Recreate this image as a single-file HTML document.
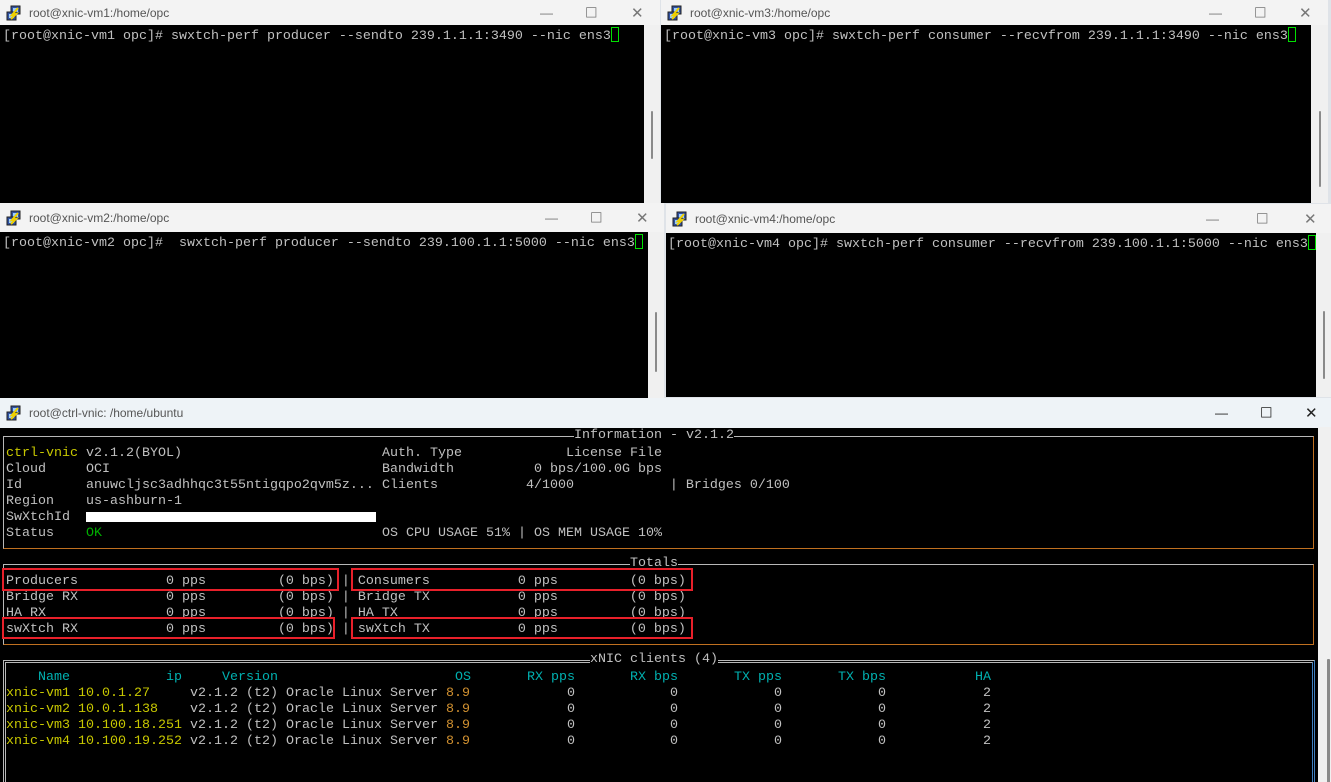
<!DOCTYPE html>
<html style="overflow:hidden"><head><meta charset="utf-8"><style>
*{margin:0;padding:0;box-sizing:border-box}
html,body{width:1331px;height:782px;overflow:hidden}
body{background:#dfe3e8;position:relative;font-family:"Liberation Mono",monospace}
.win{position:absolute;background:#f3f3f3;overflow:hidden}
.tb{position:absolute;left:0;right:0;top:0;font:12px "Liberation Sans",sans-serif;color:#555}
.tb .t{position:absolute;left:29px;top:50%;transform:translateY(-50%)}
.ico{position:absolute;left:6px;top:50%;margin-top:-8px;width:16px;height:16px}
.ctl{position:absolute;top:50%;transform:translateY(-50%);color:#777;font-size:13px}
.term{position:absolute;background:#000;color:#c0c0c0;font-size:13.33px;line-height:16px;white-space:pre}
.sb{position:absolute;background:#f0f0f0}
.th{position:absolute;width:2px;background:#8a8a8a;border-radius:1px}
.cur{display:inline-block;width:8px;height:15px;border:1px solid #00e000;vertical-align:-3px}
.a{position:absolute;white-space:pre;font-size:13.33px;line-height:16px;color:#c0c0c0}
.r{position:absolute;white-space:pre;font-size:13.33px;line-height:16px;text-align:right;width:100px}
.y{color:#c8c800}.g{color:#00b000}.c{color:#00b0b0}.o{color:#d09030}.w{color:#c0c0c0}
.box{position:absolute;border:1px solid #b8b8b8;border-right-color:#c07020;border-bottom-color:#c07020}
.red{position:absolute;border:2px solid #e8202a}
</style></head><body>
<svg width="0" height="0" style="position:absolute"><defs><g id="pi"><rect x="5" y="1" width="9" height="8" fill="#3050a0" stroke="#222" stroke-width="1"/><rect x="7" y="3" width="5" height="4" fill="#9cf"/><rect x="1" y="7" width="9" height="8" fill="#3050a0" stroke="#222"/><rect x="3" y="9" width="5" height="4" fill="#9cf"/><path d="M12 3 L6 10 L10 9 L5 14" stroke="#f0d000" stroke-width="2" fill="none"/></g></defs></svg>

<!-- W1 -->
<div class="win" style="left:0;top:0;width:660px;height:203px">
<div class="tb" style="height:25px"><svg class="ico"><use href="#pi"/></svg><span class="t">root@xnic-vm1:/home/opc</span><span class="ctl" style="left:540px">—</span><span class="ctl" style="left:585px;font-size:14px">☐</span><span class="ctl" style="left:631px;font-size:15px">✕</span></div>
<div class="term" style="left:0;top:25px;width:644px;height:178px;padding:2px 0 0 3px">[root@xnic-vm1 opc]# swxtch-perf producer --sendto 239.1.1.1:3490 --nic ens3<span class="cur"></span></div>
<div class="sb" style="left:644px;top:25px;width:16px;height:178px"><div class="th" style="left:7px;top:86px;height:48px"></div></div>
</div>
<!-- W3 -->
<div class="win" style="left:661px;top:0;width:667px;height:203px">
<div class="tb" style="height:25px"><svg class="ico"><use href="#pi"/></svg><span class="t">root@xnic-vm3:/home/opc</span><span class="ctl" style="left:548px">—</span><span class="ctl" style="left:593px;font-size:14px">☐</span><span class="ctl" style="left:638px;font-size:15px">✕</span></div>
<div class="term" style="left:0;top:25px;width:650px;height:178px;padding:2px 0 0 3px">[root@xnic-vm3 opc]# swxtch-perf consumer --recvfrom 239.1.1.1:3490 --nic ens3<span class="cur"></span></div>
<div class="sb" style="left:650px;top:25px;width:17px;height:178px"><div class="th" style="left:8px;top:86px;height:76px"></div></div>
</div>
<!-- W2 -->
<div class="win" style="left:0;top:203px;width:664px;height:195px">
<div class="tb" style="height:29px"><svg class="ico"><use href="#pi"/></svg><span class="t">root@xnic-vm2:/home/opc</span><span class="ctl" style="left:545px">—</span><span class="ctl" style="left:590px;font-size:14px">☐</span><span class="ctl" style="left:636px;font-size:15px">✕</span></div>
<div class="term" style="left:0;top:29px;width:648px;height:166px;padding:2px 0 0 3px">[root@xnic-vm2 opc]#  swxtch-perf producer --sendto 239.100.1.1:5000 --nic ens3<span class="cur"></span></div>
<div class="sb" style="left:648px;top:29px;width:16px;height:166px"><div class="th" style="left:7px;top:80px;height:60px"></div></div>
</div>
<!-- W4 -->
<div class="win" style="left:666px;top:204px;width:665px;height:193px">
<div class="tb" style="height:29px"><svg class="ico"><use href="#pi"/></svg><span class="t">root@xnic-vm4:/home/opc</span><span class="ctl" style="left:540px">—</span><span class="ctl" style="left:590px;font-size:14px">☐</span><span class="ctl" style="left:638px;font-size:15px">✕</span></div>
<div class="term" style="left:0;top:29px;width:650px;height:164px;padding:2px 0 0 2px">[root@xnic-vm4 opc]# swxtch-perf consumer --recvfrom 239.100.1.1:5000 --nic ens3<span class="cur"></span></div>
<div class="sb" style="left:650px;top:29px;width:15px;height:164px"><div class="th" style="left:7px;top:78px;height:68px"></div></div>
</div>
<!-- Bottom -->
<div class="win" style="left:0;top:398px;width:1331px;height:384px;background:#eef3f7">
<div class="tb" style="height:29px"><svg class="ico"><use href="#pi"/></svg><span class="t">root@ctrl-vnic: /home/ubuntu</span><span class="ctl" style="left:1215px;color:#222">—</span><span class="ctl" style="left:1260px;font-size:14px;color:#222">☐</span><span class="ctl" style="left:1305px;font-size:15px;color:#222">✕</span></div>
<div class="sb" style="left:1318px;top:29px;width:13px;height:355px"><div class="th" style="left:9px;top:232px;height:130px;width:3px"></div></div>
</div>
<div class="term" style="left:0;top:428px;width:1318px;height:354px"></div>

<div class="box" style="left:3px;top:436px;width:1311px;height:113px"></div>
<div class="a" style="left:574px;top:428px;background:#000">Information - v2.1.2</div>
<div class="box" style="left:3px;top:564px;width:1311px;height:81px"></div>
<div class="a" style="left:630px;top:556px;background:#000">Totals</div>
<div style="position:absolute;left:3px;top:660px;width:1312px;height:122px;border:3px double #b8b8b8;border-bottom:none;border-right-color:#4080c0"></div>
<div class="a" style="left:590px;top:652px;background:#000">xNIC clients (4)</div>

<div class="a" style="left:6px;top:446px"><span class="y">ctrl-vnic</span> v2.1.2(BYOL)
Cloud     OCI
Id        anuwcljsc3adhhqc3t55ntigqpo2qvm5z...
Region    us-ashburn-1
SwXtchId
Status    <span class="g">OK</span></div>
<div style="position:absolute;left:86px;top:512px;width:290px;height:10px;background:#fff"></div>
<div class="a" style="left:382px;top:446px">Auth. Type             License File
Bandwidth          0 bps/100.0G bps
Clients           4/1000            | Bridges 0/100


OS CPU USAGE 51% | OS MEM USAGE 10%</div>

<div class="a" style="left:6px;top:574px">Producers           0 pps         (0 bps) | Consumers           0 pps         (0 bps)
Bridge RX           0 pps         (0 bps) | Bridge TX           0 pps         (0 bps)
HA RX               0 pps         (0 bps) | HA TX               0 pps         (0 bps)
swXtch RX           0 pps         (0 bps) | swXtch TX           0 pps         (0 bps)</div>
<div class="red" style="left:2px;top:568px;width:337px;height:23px"></div>
<div class="red" style="left:351px;top:568px;width:342px;height:23px"></div>
<div class="red" style="left:2px;top:617px;width:333px;height:22px"></div>
<div class="red" style="left:351px;top:617px;width:342px;height:22px"></div>

<!-- clients header -->
<div class="a c" style="left:38px;top:670px">Name</div>
<div class="a c" style="left:166px;top:670px">ip</div>
<div class="a c" style="left:222px;top:670px">Version</div>
<div class="r c" style="left:371px;top:670px">OS</div>
<div class="r c" style="left:475px;top:670px">RX pps</div>
<div class="r c" style="left:578px;top:670px">RX bps</div>
<div class="r c" style="left:682px;top:670px">TX pps</div>
<div class="r c" style="left:786px;top:670px">TX bps</div>
<div class="r c" style="left:891px;top:670px">HA</div>

<div class="a" style="left:6px;top:686px"><span class="y">xnic-vm1 10.0.1.27</span>
<span class="y">xnic-vm2 10.0.1.138</span>
<span class="y">xnic-vm3 10.100.18.251</span>
<span class="y">xnic-vm4 10.100.19.252</span></div>
<div class="a" style="left:190px;top:686px">v2.1.2 (t2) Oracle Linux Server <span class="o">8.9</span>
v2.1.2 (t2) Oracle Linux Server <span class="o">8.9</span>
v2.1.2 (t2) Oracle Linux Server <span class="o">8.9</span>
v2.1.2 (t2) Oracle Linux Server <span class="o">8.9</span></div>
<div class="r w" style="left:475px;top:686px">0
0
0
0</div>
<div class="r w" style="left:578px;top:686px">0
0
0
0</div>
<div class="r w" style="left:682px;top:686px">0
0
0
0</div>
<div class="r w" style="left:786px;top:686px">0
0
0
0</div>
<div class="r w" style="left:891px;top:686px">2
2
2
2</div>
</body></html>
